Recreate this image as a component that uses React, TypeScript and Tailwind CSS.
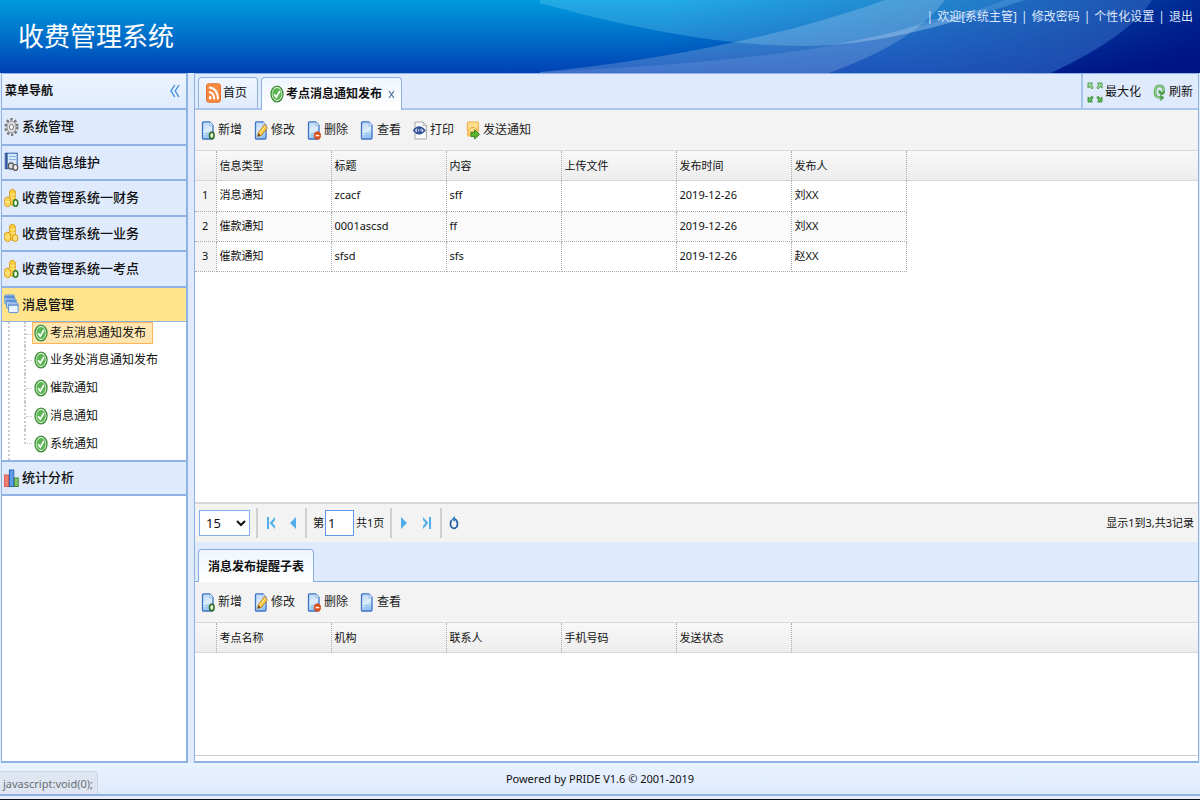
import { ReactNode } from "react";

const Banner = () => (
  <svg
    className="absolute right-0 top-0 h-full w-[55%]"
    viewBox="0 0 660 73"
    preserveAspectRatio="none"
    aria-hidden="true"
  >
    <defs>
      <linearGradient id="shade" x1="0" y1="0" x2="1" y2="0.04">
        <stop offset="0.2" stopColor="#0030a0" stopOpacity="0" />
        <stop offset="0.6" stopColor="#0034a0" stopOpacity="0.5" />
        <stop offset="1" stopColor="#001c8c" stopOpacity="0.88" />
      </linearGradient>
      <linearGradient id="navy" x1="0" y1="0" x2="0.3" y2="1">
        <stop offset="0" stopColor="#00208c" stopOpacity="0" />
        <stop offset="1" stopColor="#000a7c" stopOpacity="0.6" />
      </linearGradient>
    </defs>
    <rect width="660" height="73" fill="url(#shade)" />
    <path d="M612 0 Q590 36 511 73 H660 V0Z" fill="url(#navy)" />
    <path d="M0 0 V3 C100 31 190 46 262 46 C330 46 400 28 485 0Z" fill="#8fe0ff" fillOpacity="0.24" />
    <path d="M0 72 C130 60 250 34 345 0 H405 Q375 42 289 73 H0Z" fill="#fff" fillOpacity="0.19" />
    <path d="M0 72 C140 66 250 54 300 44 C350 34 420 18 465 0 H612 Q590 36 511 73 H0Z" fill="#8fb4f0" fillOpacity="0.21" />
    <path d="M288 45 Q380 38 450 8 L390 20 Q350 36 288 45Z" fill="#fff" fillOpacity="0.14" />
  </svg>
);

const DocIcon = ({ children, tint = "#3d74c6" }: { children?: ReactNode; tint?: string }) => (
  <svg width="14" height="19" viewBox="0 0 14 19" fill="none" aria-hidden="true">
    <defs>
      <linearGradient id="doc" x1="0" y1="0" x2="0.3" y2="1">
        <stop offset="0" stopColor="#b4d4f7" />
        <stop offset="0.6" stopColor="#deeefe" />
        <stop offset="1" stopColor="#94c4f3" />
      </linearGradient>
    </defs>
    <path d="M1.5 2 Q1.5 .8 2.6 .8 H8.8 L12 4.6 V16.8 Q12 18 10.9 18 H2.6 Q1.5 18 1.5 16.8Z" fill="url(#doc)" stroke={tint} strokeWidth="1.3" />
    <path d="M8.8 1 V4.6 H12" fill="#fff" stroke="#79a6de" strokeWidth=".8" />
    <path d="M3.5 12.5 H10 M3.5 14.8 H10" stroke="#86b7ea" strokeWidth=".8" />
    {children}
  </svg>
);

const AddIcon = () => (
  <DocIcon>
    <ellipse cx="10.8" cy="14.5" rx="2.3" ry="3.2" fill="#e9f7dd" stroke="#2d6b1c" strokeWidth="1.5" />
  </DocIcon>
);

const EditIcon = () => (
  <DocIcon>
    <path d="M3.6 15.4 L4.6 11 L10.6 3.6 L13.4 7 L7.2 14.6Z" fill="#f8c33c" stroke="#c07a12" strokeWidth=".8" />
    <path d="M3.6 15.4 L4.4 12 L6.4 14.6Z" fill="#6b4318" />
    <path d="M5.8 12.2 L11.6 5" stroke="#fff2b8" strokeWidth="1" />
  </DocIcon>
);

const RemoveIcon = () => (
  <DocIcon>
    <ellipse cx="10.4" cy="14.6" rx="3.3" ry="3.8" fill="#e8531d" stroke="#c43d10" strokeWidth=".6" />
    <path d="M8.6 14.6 H12.2" stroke="#fff" strokeWidth="1.4" />
  </DocIcon>
);

const PrintIcon = () => (
  <svg width="14" height="19" viewBox="0 0 14 19" fill="none" aria-hidden="true">
    <path d="M2 1 H10 L13.4 4.6 V18 H2Z" fill="#fafafa" stroke="#a7a7a7" />
    <path d="M10 1 V4.6 H13.4" stroke="#a7a7a7" strokeWidth=".8" />
    <path d="M.6 9.5 Q6.2 2.6 11.8 9.5 Q6.2 16 .6 9.5Z" fill="#dfe8f7" stroke="#2d4f95" strokeWidth="1.5" />
    <ellipse cx="6.2" cy="9.4" rx="2.4" ry="3" fill="#2d4f95" />
    <path d="M5.6 7.8 V11 M7.2 8 V10" stroke="#c7d7f2" strokeWidth=".8" />
  </svg>
);

const SendIcon = () => (
  <svg width="14" height="19" viewBox="0 0 14 19" fill="none" aria-hidden="true">
    <rect x="1.4" y="1" width="11" height="10" rx="1" fill="#fcdf8e" stroke="#eda93c" />
    <path d="M1.6 10 L5.5 6.5 H8.5 L12.2 10" stroke="#eda93c" />
    <path d="M.8 11.5 H6 V15.5 H.8Z" fill="#f6c65a" />
    <path d="M5 11.4 H8.6 V8.8 L13.5 13.4 L8.6 18 V15.6 H5Z" fill="#5cb531" stroke="#2c7a17" strokeWidth=".9" />
  </svg>
);

const CheckIcon = () => (
  <svg width="14" height="18" viewBox="0 0 14 18" fill="none" aria-hidden="true">
    <ellipse cx="7" cy="9" rx="6" ry="7.8" fill="#d4eecd" stroke="#3d8c38" strokeWidth="1.3" />
    <ellipse cx="7" cy="9" rx="4.5" ry="6" fill="#5cb553" />
    <path d="M4.2 9.2 L6.3 12.2 L9.9 6" stroke="#fff" strokeWidth="1.7" />
  </svg>
);

const RssIcon = () => (
  <svg width="15" height="20" viewBox="0 0 15 20" fill="none" aria-hidden="true">
    <rect x=".6" y=".8" width="13.8" height="18.4" rx="2" fill="#f58a42" stroke="#e86a20" />
    <path d="M3 4.5 Q11.6 4.8 12 16.4 M3 9 Q8 9.4 8.3 16.4" stroke="#fff" strokeWidth="1.9" />
    <ellipse cx="4.2" cy="14.8" rx="1.4" ry="1.8" fill="#fff" />
  </svg>
);

const GearIcon = () => (
  <svg width="15" height="20" viewBox="0 0 15 20" fill="none" aria-hidden="true">
    <ellipse cx="7.5" cy="10" rx="5.9" ry="7.8" stroke="#777" strokeWidth="2.4" strokeDasharray="2.4 2" />
    <ellipse cx="7.5" cy="10" rx="4.6" ry="6" fill="#e2e2e2" stroke="#8a8a8a" strokeWidth="1" />
    <ellipse cx="7.5" cy="10" rx="2" ry="2.8" fill="#fff" stroke="#777" strokeWidth="1" />
  </svg>
);

const BaseIcon = () => (
  <svg width="15" height="20" viewBox="0 0 15 20" fill="none" aria-hidden="true">
    <rect x="1.2" y="1.2" width="12" height="15.5" fill="#d6e8fb" stroke="#3563ad" />
    <path d="M2.6 1 V17" stroke="#2c4f94" strokeWidth="2" />
    <path d="M5 4.5 H12 M5 7.5 H12" stroke="#8ab4e6" />
    <ellipse cx="7" cy="14" rx="2.6" ry="3.2" fill="#ddd" stroke="#555" strokeWidth="1.2" />
    <ellipse cx="11.4" cy="15.4" rx="2.3" ry="2.9" fill="#eee" stroke="#555" strokeWidth="1.2" />
  </svg>
);

const CoinsIcon = ({ ring }: { ring?: boolean }) => (
  <svg width="15" height="20" viewBox="0 0 15 20" fill="none" aria-hidden="true">
    <path d="M5.6 3 Q8.5 -.4 11.2 3 V16 Q8.4 18.8 5.6 16Z" fill="#fbcf3e" stroke="#d99a1c" />
    <path d="M.8 10.5 Q3.6 7.6 6.4 10.5 V17 Q3.6 20.4 .8 17Z" fill="#fcd95b" stroke="#d99a1c" />
    <path d="M6 6 Q8.5 8 11 6 M6 9.4 Q8.5 11.4 11 9.4 M1 13.6 Q3.6 15.4 6.2 13.6" stroke="#fff0a8" />
    {ring ? (
      <ellipse cx="11.6" cy="15" rx="2.2" ry="3.2" fill="#eef9e6" stroke="#2f7a24" strokeWidth="1.5" />
    ) : (
      <ellipse cx="11.2" cy="15" rx="2.8" ry="3.4" fill="#fde07a" stroke="#d99a1c" />
    )}
  </svg>
);

const StackIcon = () => (
  <svg width="15" height="20" viewBox="0 0 15 20" fill="none" stroke="#5b8fd2" aria-hidden="true">
    <rect x=".8" y="1" width="9.5" height="9" rx="1" fill="#a9cdf5" />
    <path d="M1 3 H10" strokeWidth="2" />
    <rect x="2.6" y="5" width="9.5" height="9" rx="1" fill="#c5dff9" />
    <path d="M3 7 H12" strokeWidth="2" />
    <rect x="4.6" y="9" width="9.5" height="9.6" rx="1" fill="#eaf4fe" />
    <path d="M5 11 H14" strokeWidth="1.6" />
  </svg>
);

const ChartIcon = () => (
  <svg width="15" height="20" viewBox="0 0 15 20" aria-hidden="true">
    <rect x=".6" y="7" width="4" height="11.5" fill="#f08274" stroke="#dd5a4e" />
    <rect x="5.4" y="2" width="4.4" height="16.5" fill="#5c9de8" stroke="#2c62b4" />
    <rect x="10.4" y="10" width="3.8" height="8.5" fill="#83c46c" stroke="#3d8a3a" />
  </svg>
);

const MaximizeIcon = () => (
  <svg width="16" height="21" viewBox="0 0 16 21" fill="#a9dba0" stroke="#3f9440" strokeWidth=".9" aria-hidden="true">
    <path d="M1 1 H5.5 L4.4 2.6 L6 5.6 L4.8 7 L3 4.4 L1 6Z" />
    <path d="M15 1 H10.5 L11.6 2.6 L10 5.6 L11.2 7 L13 4.4 L15 6Z" />
    <path d="M1 20 H5.5 L4.4 18.4 L6 15.4 L4.8 14 L3 16.6 L1 15Z" fill="#5fb35a" />
    <path d="M15 20 H10.5 L11.6 18.4 L10 15.4 L11.2 14 L13 16.6 L15 15Z" fill="#5fb35a" />
  </svg>
);

const RefreshIcon = () => (
  <svg width="13" height="19" viewBox="0 0 13 19" fill="none" aria-hidden="true">
    <path d="M7.4 14.6 Q2 14.6 2 8.6 Q2.4 2.8 6.4 2.8 Q10.8 3 10.8 8.4 Q10.4 11 8.4 10.6 Q6.2 10 6.8 7.4" stroke="#4a9d47" strokeWidth="2.6" />
    <path d="M7.4 14.6 Q2 14.6 2 8.6 Q2.4 2.8 6.4 2.8 Q10.8 3 10.8 8.4" stroke="#a5dc9c" strokeWidth="1.1" />
    <path d="M7 11.6 L11.4 14.4 L7.6 18.2Z" fill="#4a9d47" />
  </svg>
);

const menus = [
  { label: "系统管理", icon: <GearIcon /> },
  { label: "基础信息维护", icon: <BaseIcon /> },
  { label: "收费管理系统一财务", icon: <CoinsIcon ring /> },
  { label: "收费管理系统一业务", icon: <CoinsIcon /> },
  { label: "收费管理系统一考点", icon: <CoinsIcon ring /> },
  { label: "消息管理", icon: <StackIcon />, open: true },
];

const children = ["考点消息通知发布", "业务处消息通知发布", "催款通知", "消息通知", "系统通知"];

const docTools = [
  { label: "新增", icon: <AddIcon /> },
  { label: "修改", icon: <EditIcon /> },
  { label: "删除", icon: <RemoveIcon /> },
  { label: "查看", icon: <DocIcon /> },
];

const noticeTools = [
  ...docTools,
  { label: "打印", icon: <PrintIcon /> },
  { label: "发送通知", icon: <SendIcon /> },
];

const rows = [
  ["消息通知", "zcacf", "sff", "", "2019-12-26", "刘XX"],
  ["催款通知", "0001ascsd", "ff", "", "2019-12-26", "刘XX"],
  ["催款通知", "sfsd", "sfs", "", "2019-12-26", "赵XX"],
];

const Toolbar = ({ tools }: { tools: { label: string; icon: ReactNode }[] }) => (
  <div className="flex h-10 shrink-0 items-center gap-3 bg-[#f3f3f3] px-1.5">
    {tools.map((tool) => (
      <button key={tool.label} className="flex items-center gap-[3px] text-[#222]">
        {tool.icon}
        {tool.label}
      </button>
    ))}
  </div>
);

const Grid = ({ columns, data }: { columns: string[]; data: string[][] }) => (
  <div className="flex-1 overflow-hidden bg-white">
    <div className="h-[31px] border-y border-[#d8d8d8] bg-linear-to-b from-[#f8f8f8] to-[#ededed]">
      <table className="table-fixed border-collapse text-left text-[11px]">
        <colgroup>
          <col className="w-[21px]" />
          {columns.map((column) => (
            <col key={column} className="w-[115px]" />
          ))}
        </colgroup>
        <thead>
          <tr className="h-[30px]">
            <th className="border-r border-dotted border-[#aaa]" aria-label="序号"></th>
            {columns.map((column) => (
              <th key={column} className="border-r border-dotted border-[#aaa] px-[3px] font-normal">
                {column}
              </th>
            ))}
          </tr>
        </thead>
        <tbody>
          {data.map((row, i) => (
            <tr key={i} className="h-[30px] odd:bg-white even:bg-[#fafafa]">
              <td className="border-b border-r border-dotted border-[#aaa] bg-[#f4f4f4] text-center">
                {i + 1}
              </td>
              {row.map((cell, j) => (
                <td key={j} className="border-b border-r border-dotted border-[#aaa] px-[3px]">
                  {cell}
                </td>
              ))}
            </tr>
          ))}
        </tbody>
      </table>
    </div>
  </div>
);

const Header = () => (
  <header className="relative flex h-[73px] shrink-0 justify-between bg-linear-to-b from-[#009bdd] to-[#0040b4] text-white">
    <Banner />
    <h1 className="relative self-center pl-[18px] text-[26px]">收费管理系统</h1>
    <nav className="relative flex h-[34px] items-center gap-1 pr-[7px] text-[#dfe8fb]">
      <span>|</span>
      <a href="#">欢迎[系统主管]</a>
      <span>|</span>
      <a href="#">修改密码</a>
      <span>|</span>
      <a href="#">个性化设置</a>
      <span>|</span>
      <a href="#">退出</a>
    </nav>
  </header>
);

const Sidebar = () => (
  <aside className="flex w-[187px] shrink-0 flex-col border-x-2 border-t border-b-2 border-l border-[#8db2e3] bg-white text-[13px] font-medium">
    <div className="flex h-[34px] items-center justify-between bg-linear-to-b from-[#edf4ff] to-[#dfebfd] pl-[3px] pr-1.5 text-xs font-bold">
      菜单导航
      <button aria-label="收起" className="text-[#3f8fdc]">
        <svg width="10" height="14" viewBox="0 0 10 14" fill="none" stroke="currentColor" strokeWidth="1.4">
          <path d="M4.8 1 L1 7 L4.8 13 M9 1 L5.2 7 L9 13" />
        </svg>
      </button>
    </div>
    <div className="grid h-[213px] shrink-0 grid-rows-6">
      {menus.map((menu) => (
        <button
          key={menu.label}
          className={`flex items-center gap-[3px] border-t-2 border-[#8db2e3] px-0.5 ${
            menu.open ? "bg-[#ffe48d]" : "bg-[#dfebfd]"
          }`}
        >
          {menu.icon}
          {menu.label}
        </button>
      ))}
    </div>
    <div className="border-t border-[#8db2e3] pl-1.5">
      <ul className="border-l-2 border-dotted border-[#ccc] pb-0.5 pl-3.5 text-xs font-normal">
        {children.map((child, i) => (
          <li key={child} className={`flex ${i === 0 ? "h-6 items-start" : "h-7 items-center"}`}>
            <span
              className={`flex w-2 self-stretch border-dotted border-[#ccc] ${
                i === children.length - 1 ? "mb-3.5 border-l-2 border-b" : "items-center border-l-2"
              }`}
            >
              {i < children.length - 1 && <span className="w-full border-t border-dotted border-[#ccc]"></span>}
            </span>
            <a
              href="#"
              className={`flex h-[22px] items-center gap-0.5 border px-px pr-1.5 ${
                i === 0 ? "border-[#ffb45e] bg-[#ffe6b0]" : "border-transparent"
              }`}
            >
              <CheckIcon />
              {child}
            </a>
          </li>
        ))}
      </ul>
    </div>
    <button className="flex h-9 shrink-0 items-center gap-[3px] border-y-2 border-[#8db2e3] bg-[#dfebfd] px-0.5">
      <ChartIcon />
      统计分析
    </button>
  </aside>
);

const Divider = () => <span className="h-[30px] border-l-2 border-[#d0d0d0]"></span>;

const Pager = () => (
  <div className="flex h-10 shrink-0 items-center border-t-2 border-[#d8d8d8] bg-[#f3f3f3] pl-1 pr-1 text-[11px]">
    <select
      aria-label="每页条数"
      defaultValue="15"
      className="mr-1.5 h-[26px] w-[51px] border border-[#85aee8] bg-white px-0.5 text-[13px]"
    >
      <option>15</option>
    </select>
    <Divider />
    <button aria-label="首页" className="ml-2">
      <svg width="10" height="12" viewBox="0 0 10 12" fill="#52aeea">
        <path d="M1 0 H3 V12 H1Z M9 0 V3 L6.5 6 L9 9 V12 L3.6 6Z" />
      </svg>
    </button>
    <button aria-label="上一页" className="ml-[13px] mr-2">
      <svg width="8" height="12" viewBox="0 0 8 12">
        <path d="M7 0 V12 L1 6Z" fill="#52aeea" />
      </svg>
    </button>
    <Divider />
    <label className="ml-1.5 flex items-center">
      第
      <input
        type="text"
        defaultValue="1"
        aria-label="页码"
        className="mx-px h-[26px] w-[29px] border border-[#5f98e8] bg-white px-0.5 text-[13px]"
      />
    </label>
    <span className="ml-px mr-1.5">共1页</span>
    <Divider />
    <button aria-label="下一页" className="ml-2">
      <svg width="8" height="12" viewBox="0 0 8 12">
        <path d="M1 0 V12 L7 6Z" fill="#52aeea" />
      </svg>
    </button>
    <button aria-label="末页" className="ml-3.5 mr-2">
      <svg width="10" height="12" viewBox="0 0 10 12" fill="#52aeea">
        <path d="M7 0 H9 V12 H7Z M1 0 V3 L3.5 6 L1 9 V12 L6.4 6Z" />
      </svg>
    </button>
    <Divider />
    <button aria-label="刷新" className="ml-[7px]">
      <svg width="10" height="14" viewBox="0 0 10 14" fill="none">
        <path d="M2.6 4 Q.6 7.6 2.2 10.8 Q5 14 7.8 10.8 Q9.4 7 7.2 4 Q6.4 3.2 4.6 3.2" stroke="#1f5f9f" strokeWidth="1.7" />
        <path d="M6 0 V6 L2.6 3.2Z" fill="#2f83cc" />
      </svg>
    </button>
    <span className="ml-auto">显示1到3,共3记录</span>
  </div>
);

const App = () => {
  return (
    <div className="flex h-screen flex-col bg-[#dfebfd] font-['Noto_Sans','Noto_Sans_CJK_SC',sans-serif] text-xs text-[#111]">
      <Header />
      <div className="flex min-h-0 flex-1 pl-px pr-px">
        <Sidebar />
        <main className="ml-1.5 flex min-w-0 flex-1 flex-col border-x border-t border-b-2 border-[#8db2e3]">
          <div className="flex h-9 shrink-0 justify-between border-b-2 border-[#a9c5ec] bg-[#dfebfd]">
            <div className="flex items-end gap-[3px] pl-[3px]">
              <button className="flex h-[31px] w-[60px] items-center gap-0.5 rounded-t border-x border-t border-[#8db2e3] bg-linear-to-b from-[#f0f6ff] to-[#dfebfd] pl-[7px]">
                <RssIcon />
                首页
              </button>
              <button className="-mb-0.5 flex h-[33px] items-center gap-0.5 rounded-t border-x border-t border-[#8db2e3] bg-linear-to-b from-[#f0f6ff] to-white pl-2 pr-1.5 font-bold">
                <CheckIcon />
                考点消息通知发布
                <svg width="7" height="9" viewBox="0 0 7 9" stroke="#4a7099" strokeWidth="1.2" className="ml-1">
                  <path d="M1 1 L6 8 M6 1 L1 8" />
                </svg>
              </button>
            </div>
            <div className="flex items-center border-l-2 border-[#a9c5ec] pl-1 pr-[5px] pt-0.5">
              <button className="flex items-center gap-0.5">
                <MaximizeIcon />
                最大化
              </button>
              <button className="ml-3 flex items-center gap-[3px]">
                <RefreshIcon />
                刷新
              </button>
            </div>
          </div>
          <Toolbar tools={noticeTools} />
          <Grid columns={["信息类型", "标题", "内容", "上传文件", "发布时间", "发布人"]} data={rows} />
          <Pager />
          <div className="flex h-10 shrink-0 items-end border-b border-[#86ade3] bg-[#dfebfd] pl-[3px]">
            <button className="-mb-px flex h-[33px] items-center rounded-t border-x border-t border-[#86ade3] bg-linear-to-b from-[#f0f6ff] to-white px-[9px] pt-0.5 font-bold">
              消息发布提醒子表
            </button>
          </div>
          <section className="flex h-[179px] shrink-0 flex-col bg-white">
            <Toolbar tools={docTools} />
            <Grid columns={["考点名称", "机构", "联系人", "手机号码", "发送状态"]} data={[]} />
            <div className="h-[6px] border-t border-[#ccc]"></div>
          </section>
        </main>
      </div>
      <footer className="relative flex h-[33px] shrink-0 items-center justify-center border-b-2 border-[#8db2e3] bg-linear-to-b from-[#e9f2ff] to-[#deeafc] pt-0.5 text-[11px]">
        Powered by PRIDE V1.6 © 2001-2019
        <span className="absolute bottom-0 left-0 rounded-tr border-r border-t border-[#cdd5e2] bg-[#dfe6f1] pb-0.5 pl-[3px] pr-1 pt-1 leading-4 text-[#6a6e76]">
          javascript:void(0);
        </span>
      </footer>
      <div className="h-1 shrink-0 border-b border-[#10101c] bg-[#e6edf8]"></div>
    </div>
  );
};

export default App;
